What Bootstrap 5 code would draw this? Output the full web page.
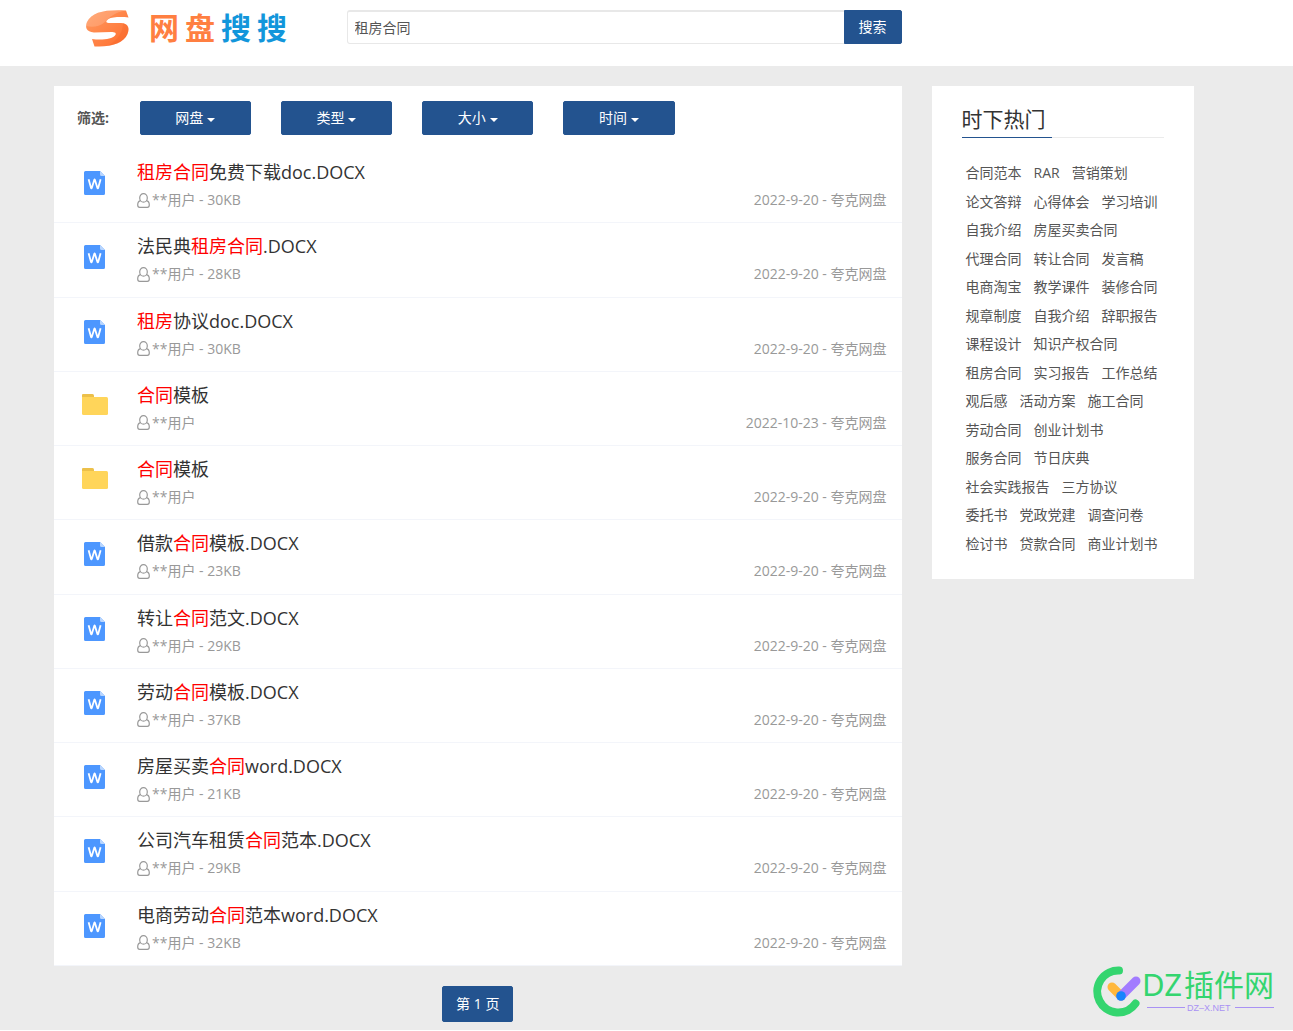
<!DOCTYPE html>
<html lang="zh-CN">
<head>
<meta charset="utf-8">
<meta name="viewport" content="width=device-width, initial-scale=1">
<title>租房合同 - 网盘搜搜</title>
<link href="https://cdn.jsdelivr.net/npm/bootstrap@5.3.0/dist/css/bootstrap.min.css" rel="stylesheet">
<style>
  body { font: 14px/20px "Open Sans", "Noto Sans CJK SC", sans-serif; color: #555; background: #fff; }
  a { color: inherit; text-decoration: none; }
  .page-bg { background: #ebebeb; }
  .shell { padding-right: 45px; }
  .wrap { max-width: 1170px; padding: 0 15px; }
  .row { --bs-gutter-x: 30px; }
  .site-head { background: #fff; padding-top: 10px; padding-bottom: 20px; }
  .brand { height: 36px; padding-left: 31px; }
  .brand svg { width: 46px; height: 40px; margin-right: 18px; }
  .brand-name { font: 700 30px/34px "Noto Sans CJK SC", sans-serif; color: #ff7f41; gap: 6px; padding-bottom: 4px; }
  .brand-name .blue { color: #1296db; }
  .search-box { height: 34px; border: 1px solid #e8e8e8; border-top-width: 2px; border-radius: 3px 0 0 3px; padding: 3px 7px 5px; font-size: 14px; line-height: 20px; color: #555; }
  .btn-navy { --bs-btn-color: #fff; --bs-btn-bg: #23538f; --bs-btn-border-color: #23538f; --bs-btn-hover-color: #fff; --bs-btn-hover-bg: #1b4478; --bs-btn-hover-border-color: #1b4478; --bs-btn-active-color: #fff; --bs-btn-active-bg: #1b4478; --bs-btn-font-size: 14px; --bs-btn-line-height: 20px; --bs-btn-padding-y: 6px; --bs-btn-padding-x: 14px; --bs-btn-border-radius: 2px; }
  .btn-navy.dropdown-toggle::after { margin-left: 4px; border-width: 4px 4px 0; vertical-align: 1px; }
  .main-area { padding-top: 20px; }
  .panel { background: #fff; }
  .filters { padding: 15px 0 14px; }
  .filters .btn-cell { padding: 0 15px; }
  .filter-label { font-weight: 700; padding-left: 23px; white-space: nowrap; }
  .results { min-height: 817px; margin: 0; }
  .result { border-bottom: 1px solid #f3f5fa; }
  .file-icon { padding: 20px 0 0 27px; width: 83px; }
  .file-icon svg { width: 28px; height: 28px; display: block; }
  .result-body { padding: 11px 15px 0 0; min-width: 0; }
  .result-title { font-size: 18px; line-height: 24px; font-weight: 400; color: #333; margin: 0 0 6px; }
  .result-title em { color: #f00; font-style: normal; }
  .meta { color: #999; }
  .meta svg { width: 13px; height: 15px; margin-right: 2px; }
  .hot { padding: 19px 30px 25px; }
  .hot-head { border-bottom: 1px solid #ebebeb; }
  .hot-head h2 { font-size: 21px; line-height: 28px; color: #333; font-weight: 400; margin: 0 0 -1px; padding-bottom: 4px; width: 90px; border-bottom: 1px solid #23538f; }
  .tags { padding: 0 4px; margin: 25px 0 0; column-gap: 12px; min-height: 391px; align-content: space-between; }
  .pager { padding: 20px 0 8px; }
  .pager .btn { --bs-btn-padding-y: 7px; --bs-btn-padding-x: 13px; }
  .stamp { position: absolute; right: 12px; top: 960px; width: 190px; height: 60px; }
</style>
<script src="https://cdn.jsdelivr.net/npm/bootstrap@5.3.0/dist/js/bootstrap.bundle.min.js"></script>
</head>
<body>
<svg class="d-none" aria-hidden="true">
  <symbol id="word" viewBox="0 0 28 28"><path fill="#4d97ff" d="M4.500 2H19l5 5v17.500a1.500 1.500 0 0 1-1.500 1.500h-18A1.500 1.500 0 0 1 3 24.500v-21A1.500 1.500 0 0 1 4.500 2z"/><path fill="#b8d6ff" d="M19 2l5 5h-3.500A1.500 1.500 0 0 1 19 5.500z"/><path fill="none" stroke="#fff" stroke-width="1.800" stroke-linejoin="bevel" d="M7.600 10.300l2.500 9h.6l2.700-8.800h.4l2.700 8.800h.6l2.500-9"/></symbol>
  <symbol id="folder" viewBox="0 0 28 28"><path fill="#ecc04a" d="M2 2h9.500q1.500 0 1.500 1.500V9H1V3q0-1 1-1z"/><path fill="#ffd55a" d="M1 5h24.500Q27 5 27 6.500v15q0 1.500-1.500 1.500h-23Q1 23 1 21.500z"/></symbol>
  <symbol id="person" viewBox="0 0 13 15"><g fill="none" stroke="#999" stroke-width="1.200"><ellipse cx="6.500" cy="4.900" rx="3.800" ry="4.200"/><path d="M3.600 7.600C1.600 8 .7 9.800.7 12c0 1.500.8 2.300 2 2.300h7.600c1.200 0 2-.8 2-2.300 0-2.200-.9-4-2.900-4.400"/></g></symbol>
</svg>
<div class="page-bg position-relative">
<header class="site-head shell">
  <div class="container-fluid wrap">
    <div class="row">
      <div class="col-md-3">
        <a href="#" class="brand d-flex align-items-center">
          <svg viewBox="0 0 46 40" aria-hidden="true"><defs><linearGradient id="sg" x2="1" y2="1"><stop offset="0" stop-color="#ff9c62"/><stop offset="1" stop-color="#ff6d2e"/></linearGradient></defs><path fill="url(#sg)" d="M41 2.500l2.500 7C36 8.500 27 9 23.500 11c-3.500 2.500-2.500 4 1.500 4h11c7 .5 9 5 6.500 11C39 35 26 39 12 38.500H9.500L7 31c10 1.500 20 0 23-3.500 2-2.500 0-3.500-4-3.500l-17 .5C1 24 0 19 2 14 7 4 20 1.500 41 2.500z"/><path fill="#fff" opacity=".16" d="M1.300 18C1 8 14 1 41 2.500 30 4 25 9 20 14 14 19 7 19.500 1.300 18z"/><path fill="#f05a20" opacity=".25" d="M38 15.200c5 1 7 4 4.500 10.800-4 8-12 11-20 12C33 32 38 24 38 15.200z"/></svg>
          <span class="brand-name d-flex"><span>网</span><span>盘</span><span class="blue">搜</span><span class="blue">搜</span></span>
        </a>
      </div>
      <div class="col-md-6">
        <form class="input-group" role="search">
          <input type="text" class="form-control search-box" value="租房合同" aria-label="搜索关键词">
          <button type="button" class="btn btn-navy">搜索</button>
        </form>
      </div>
    </div>
  </div>
</header>
<div class="shell main-area">
  <div class="container-fluid wrap">
    <div class="row align-items-start">
      <main class="col-md-9">
        <div class="panel">
          <div class="filters row gx-0 mx-0 align-items-center">
            <div class="col-1 filter-label">筛选:</div>
            <div class="col-2 btn-cell"><button type="button" class="btn btn-navy dropdown-toggle w-100">网盘</button></div>
            <div class="col-2 btn-cell"><button type="button" class="btn btn-navy dropdown-toggle w-100">类型</button></div>
            <div class="col-2 btn-cell"><button type="button" class="btn btn-navy dropdown-toggle w-100">大小</button></div>
            <div class="col-2 btn-cell"><button type="button" class="btn btn-navy dropdown-toggle w-100">时间</button></div>
          </div>
          <ul class="results list-unstyled d-flex flex-column" id="results"></ul>
        </div>
        <nav class="pager text-center" aria-label="分页"><a href="#" class="btn btn-navy">第 1 页</a></nav>
      </main>
      <aside class="col-md-3">
        <div class="panel hot">
          <div class="hot-head"><h2>时下热门</h2></div>
          <ul class="tags list-unstyled d-flex flex-wrap" id="tags"></ul>
        </div>
      </aside>
    </div>
  </div>
</div>
<svg class="stamp" viewBox="0 0 190 60" role="img" aria-label="DZ插件网">
  <g fill="none" stroke-linecap="round"><path stroke="#34d56f" stroke-width="8" d="M28 10.500A21 21 0 1 0 44.500 43.500"/><path stroke="#ffb83d" stroke-width="9" d="M21 27l9 9"/><path stroke="#a27cff" stroke-width="9" d="M45 21L30 36"/></g>
  <circle cx="30" cy="36" r="4.800" fill="#1684fc"/>
  <g fill="#34d56f"><text x="51" y="36" font-family="Noto Sans, sans-serif" font-weight="400" font-size="31">DZ</text><text x="93" y="36" font-family="Noto Sans CJK SC, sans-serif" font-weight="400" font-size="30">插件网</text></g>
  <path stroke="#a992f4" d="M56 47.500h38M144 47.500h39"/>
  <text x="96" y="51" font-family="Liberation Sans, sans-serif" font-size="9" fill="#a992f4">DZ–X.NET</text>
</svg>
</div>
<script>
  // Title parts between [ ] are the highlighted search terms
  const files = [
    ['[租房合同]免费下载doc.DOCX', '30KB', '2022-9-20'],
    ['法民典[租房合同].DOCX', '28KB', '2022-9-20'],
    ['[租房]协议doc.DOCX', '30KB', '2022-9-20'],
    ['[合同]模板', '', '2022-10-23'],
    ['[合同]模板', '', '2022-9-20'],
    ['借款[合同]模板.DOCX', '23KB', '2022-9-20'],
    ['转让[合同]范文.DOCX', '29KB', '2022-9-20'],
    ['劳动[合同]模板.DOCX', '37KB', '2022-9-20'],
    ['房屋买卖[合同]word.DOCX', '21KB', '2022-9-20'],
    ['公司汽车租赁[合同]范本.DOCX', '29KB', '2022-9-20'],
    ['电商劳动[合同]范本word.DOCX', '32KB', '2022-9-20']
  ];
  document.getElementById('results').innerHTML = files.map(([title, size, date]) => `
    <li class="result d-flex flex-fill">
      <div class="file-icon flex-shrink-0"><svg aria-hidden="true"><use href="#${size ? 'word' : 'folder'}"/></svg></div>
      <div class="result-body flex-grow-1">
        <h3 class="result-title"><a href="#">${title.replace('[', '<em>').replace(']', '</em>')}</a></h3>
        <div class="meta d-flex justify-content-between">
          <span class="d-flex align-items-center"><svg aria-hidden="true"><use href="#person"/></svg>**用户${size ? ' - ' + size : ''}</span>
          <span>${date} - 夸克网盘</span>
        </div>
      </div>
    </li>`).join('');
  const tags = '合同范本 RAR 营销策划 论文答辩 心得体会 学习培训 自我介绍 房屋买卖合同 代理合同 转让合同 发言稿 电商淘宝 教学课件 装修合同 规章制度 自我介绍 辞职报告 课程设计 知识产权合同 租房合同 实习报告 工作总结 观后感 活动方案 施工合同 劳动合同 创业计划书 服务合同 节日庆典 社会实践报告 三方协议 委托书 党政党建 调查问卷 检讨书 贷款合同 商业计划书';
  document.getElementById('tags').innerHTML = tags.split(' ').map(t => `<li><a href="#">${t}</a></li>`).join('');
</script>
</body>
</html>
